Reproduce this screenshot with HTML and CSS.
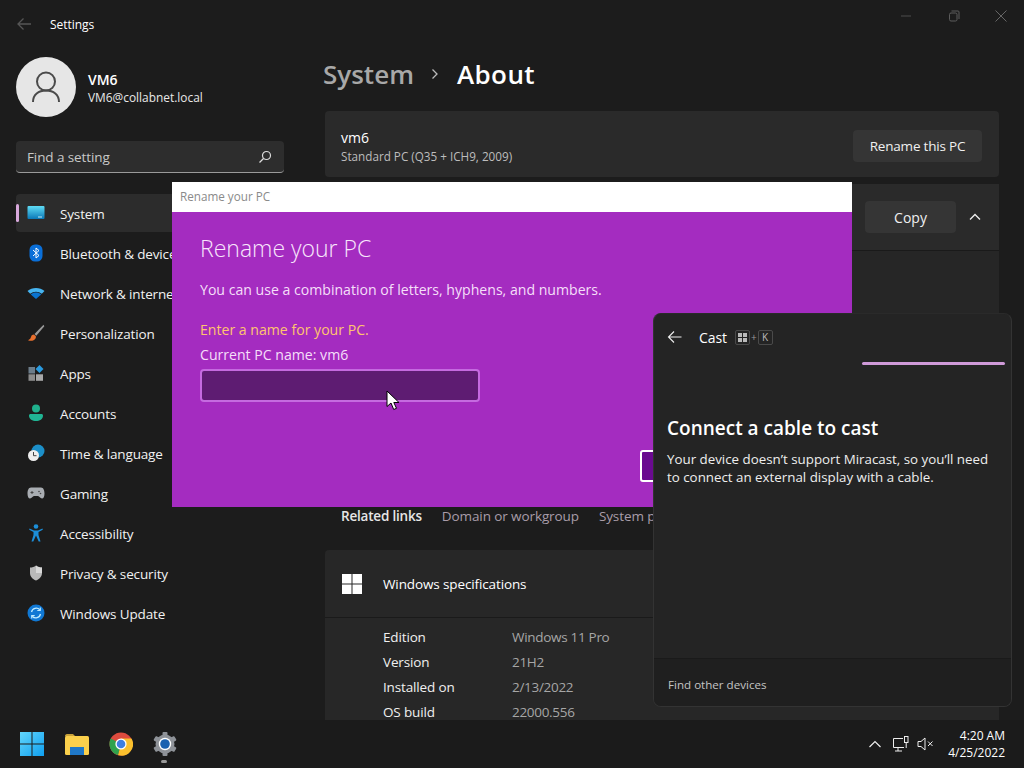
FILE: index.html
```html
<!DOCTYPE html>
<html lang="en">
<head>
<meta charset="utf-8">
<title>Settings</title>
<link rel="stylesheet" href="styles.css">
</head>
<body>
<div class="screen">
  <div class="settings">
    <aside class="sidebar">
      <div class="titlebar">
        <svg class="back-dim" width="16" height="16" viewBox="0 0 16 16"><path d="M15 8H2M7.500 2.500 2 8l5.500 5.500" fill="none" stroke="#555" stroke-width="1.300"/></svg>
        <span class="app-name">Settings</span>
      </div>
      <div class="profile">
        <div class="avatar">
          <svg width="32" height="36" viewBox="0 0 32 36"><circle cx="16" cy="12.500" r="9" fill="none" stroke="#4a4a4a" stroke-width="2"/><path d="M3 33c0-7.500 5.500-11.500 13-11.500S29 25.500 29 33" fill="none" stroke="#4a4a4a" stroke-width="2"/></svg>
        </div>
        <div class="who">
          <div class="who-name">VM6</div>
          <div class="who-mail">VM6@collabnet.local</div>
        </div>
      </div>
      <div class="search">
        <span>Find a setting</span>
        <svg width="14" height="14" viewBox="0 0 14 14"><circle cx="8.500" cy="5.500" r="4" fill="none" stroke="#ddd" stroke-width="1.200"/><path d="M5.500 8.500 1.500 12.500" stroke="#ddd" stroke-width="1.200"/></svg>
      </div>
      <nav class="nav">
        <div class="nav-item active">
          <span class="pill"></span>
          <svg width="18" height="16" viewBox="0 0 18 16"><defs><linearGradient id="sys" x1="0" y1="0" x2="0" y2="1"><stop offset="0" stop-color="#5fdcf5"/><stop offset="1" stop-color="#0a78b8"/></linearGradient></defs><rect x="0.500" y="1" width="17" height="13" rx="1" fill="url(#sys)"/><rect x="11" y="11.500" width="4" height="1" fill="#bfeaf5"/></svg>
          <span>System</span>
        </div>
        <div class="nav-item">
          <svg width="14" height="18" viewBox="0 0 14 18"><rect x="0.500" y="0.500" width="13" height="17" rx="5.500" fill="#0a6fd8"/><path d="M4 6l6 5.500L7 14V4l3 2.500L4 12" fill="none" stroke="#fff" stroke-width="1"/></svg>
          <span>Bluetooth &amp; devices</span>
        </div>
        <div class="nav-item">
          <svg width="18" height="12" viewBox="0 0 18 12"><path d="M0.500 4C5 0 13 0 17.500 4L14.800 6.800C11.500 4 6.500 4 3.200 6.800Z" fill="#46b4f0"/><path d="M3.800 7.400C6.800 4.900 11.200 4.900 14.200 7.400L9 12Z" fill="#0a74d0"/></svg>
          <span>Network &amp; internet</span>
        </div>
        <div class="nav-item">
          <svg width="18" height="18" viewBox="0 0 18 18"><path d="M16.500 0.800 7.500 10l1.800 1.800 8-9.500Z" fill="#9a9a9a"/><path d="M6.800 10.500c-2.500.2-2.600 2.200-3.200 3.600-.4 1-1.500 1.800-2.600 2.200 2.800 1 6.200.6 7.500-1.800.6-1.200.6-2-.1-2.800Z" fill="#e8702e"/></svg>
          <span>Personalization</span>
        </div>
        <div class="nav-item">
          <svg width="16" height="16" viewBox="0 0 16 16"><rect x="0.500" y="2" width="6.500" height="6.500" fill="#6d7d8a"/><rect x="0.500" y="9.300" width="6.500" height="6.500" fill="#8c8c8c"/><rect x="8" y="9.300" width="7" height="6.500" fill="#a8a8a8"/><path d="M11.500 0 15.500 4 11.500 8 7.500 4Z" fill="#2a9be0"/></svg>
          <span>Apps</span>
        </div>
        <div class="nav-item">
          <svg width="16" height="18" viewBox="0 0 16 18"><circle cx="8" cy="4.500" r="4" fill="#1fb08c"/><path d="M1 11.500c0-1 .8-1.500 1.500-1.500h11c.7 0 1.500.5 1.500 1.500 0 4-3.500 5.500-7 5.500s-7-1.500-7-5.500Z" fill="#20b594"/></svg>
          <span>Accounts</span>
        </div>
        <div class="nav-item">
          <svg width="18" height="18" viewBox="0 0 18 18"><circle cx="11" cy="7" r="6.500" fill="#1c8fc8"/><circle cx="6.500" cy="11.500" r="5.500" fill="#eee"/><path d="M6.500 8v3.700h3" fill="none" stroke="#444" stroke-width="1"/></svg>
          <span>Time &amp; language</span>
        </div>
        <div class="nav-item">
          <svg width="18" height="12" viewBox="0 0 18 12"><path d="M4 0.500h10c2.500 0 3.500 3 3.500 6 0 3-1 5-2.500 5-2 0-2.500-2.500-4-2.500H7c-1.500 0-2 2.500-4 2.500-1.500 0-2.500-2-2.500-5s1-6 3.500-6Z" fill="#a9adb2"/><path d="M3.500 5.500h3M5 4v3" stroke="#444" stroke-width="1"/><circle cx="12" cy="4.500" r=".8" fill="#444"/><circle cx="13.500" cy="6.500" r=".8" fill="#444"/></svg>
          <span>Gaming</span>
        </div>
        <div class="nav-item">
          <svg width="14" height="18" viewBox="0 0 14 18"><circle cx="7" cy="2.500" r="2.300" fill="#1c8ed8"/><path d="M0.500 4.500 5 6.500h4l4.500-2 .3 1.200L9.500 8v3l2 6.500h-1.800L7 11.500 4.300 17.500H2.500l2-6.500V8L0.200 5.700Z" fill="#1c8ed8"/></svg>
          <span>Accessibility</span>
        </div>
        <div class="nav-item">
          <svg width="14" height="16" viewBox="0 0 14 16"><path d="M7 0.500c1.800 1.400 3.800 2 6 2v5.500c0 3.500-2.500 6-6 7.500-3.500-1.500-6-4-6-7.500V2.500c2.200 0 4.200-.6 6-2Z" fill="#b9b9b9"/><path d="M7 0.500c1.800 1.400 3.800 2 6 2v5.500H7Z" fill="#d8d8d8"/></svg>
          <span>Privacy &amp; security</span>
        </div>
        <div class="nav-item">
          <svg width="18" height="18" viewBox="0 0 18 18"><circle cx="9" cy="9" r="8.500" fill="#1078d4"/><path d="M4.500 8a4.800 4.800 0 0 1 8.300-2.200M13.500 10a4.800 4.800 0 0 1-8.300 2.200" fill="none" stroke="#bfeaff" stroke-width="1.300"/><path d="M13.300 3.500v3h-3M4.700 14.500v-3h3" fill="none" stroke="#bfeaff" stroke-width="1.100"/></svg>
          <span>Windows Update</span>
        </div>
      </nav>
    </aside>
    <main class="content">
      <div class="winctl">
        <svg width="12" height="12" viewBox="0 0 12 12"><path d="M1 6h10" stroke="#4d4d4d"/></svg>
        <svg width="12" height="12" viewBox="0 0 12 12"><rect x="1.500" y="3" width="7.500" height="8" rx="1.500" fill="none" stroke="#5c5c5c"/><path d="M3.500 1h6.500a1 1 0 0 1 1 1v7" fill="none" stroke="#5c5c5c"/></svg>
        <svg width="12" height="12" viewBox="0 0 12 12"><path d="M.5.500l11 11M11.500.500l-11 11" stroke="#666"/></svg>
      </div>
      <h1 class="crumbs">
        <span class="crumb-parent">System</span>
        <svg class="crumb-sep" width="10" height="12" viewBox="0 0 10 12"><path d="M2.500 1.500 7 6l-4.500 4.500" fill="none" stroke="#bbb" stroke-width="1.300"/></svg>
        <span class="crumb-current">About</span>
      </h1>
      <section class="card card-name">
        <div>
          <div class="pc-name">vm6</div>
          <div class="pc-model">Standard PC (Q35 + ICH9, 2009)</div>
        </div>
        <button class="btn btn-rename">Rename this PC</button>
      </section>
      <section class="card card-device">
        <div class="device-head">
          <button class="btn btn-copy">Copy</button>
          <svg width="14" height="14" viewBox="0 0 14 14"><path d="M2 9.500 7 4.500l5 5" fill="none" stroke="#eee" stroke-width="1.300"/></svg>
        </div>
        <div class="device-body"></div>
      </section>
      <div class="related">
        <strong>Related links</strong>
        <span>Domain or workgroup</span>
        <span>System protection</span>
      </div>
      <section class="card card-spec">
        <div class="spec-head">
          <svg width="20" height="20" viewBox="0 0 20 20"><path d="M0 0h9.500v9.500H0zM10.500 0H20v9.500h-9.500zM0 10.500h9.500V20H0zM10.500 10.500H20V20h-9.500z" fill="#fff"/></svg>
          <span>Windows specifications</span>
        </div>
        <dl class="spec-list">
          <dt>Edition</dt><dd>Windows 11 Pro</dd>
          <dt>Version</dt><dd>21H2</dd>
          <dt>Installed on</dt><dd>2/13/2022</dd>
          <dt>OS build</dt><dd>22000.556</dd>
        </dl>
      </section>
    </main>
  </div>
  <footer class="taskbar">
    <div class="task-apps">
      <svg width="24" height="24" viewBox="0 0 24 24"><defs><linearGradient id="win" x1="0" y1="0" x2="1" y2="1"><stop offset="0" stop-color="#62d6fb"/><stop offset="1" stop-color="#0f9ff0"/></linearGradient></defs><path d="M0 0h11.500v11.500H0zM12.500 0H24v11.500H12.500zM0 12.500h11.500V24H0zM12.500 12.500H24V24H12.500z" fill="url(#win)"/></svg>
      <svg width="26" height="24" viewBox="0 0 26 24"><path d="M1 4c0-1 .6-2 2-2h6l2.500 2.500H1Z" fill="#c9a23a"/><rect x="1" y="4" width="24" height="19" rx="1.500" fill="#fbd04c"/><path d="M6 15h14v8H6Z" fill="#1f78c8"/></svg>
      <svg class="task-chrome" width="24" height="24" viewBox="0 0 24 24"><circle cx="12" cy="12" r="11.500" fill="#dd4b3e"/><path d="M12 6.500h10.500A11.500 11.500 0 0 1 9 23.100L12 12Z" fill="#fbc02d"/><path d="M12 12 9 23.100A11.500 11.500 0 0 1 1.800 6.500Z" fill="#2fa24d"/><circle cx="12" cy="12" r="5.600" fill="#fff"/><circle cx="12" cy="12" r="4.300" fill="#3f7fe0"/></svg>
      <div class="task-active">
        <svg width="26" height="26" viewBox="0 0 26 26"><circle cx="13" cy="13" r="9.500" fill="#8e9298"/><g fill="#8e9298"><rect x="10.500" y="1" width="5" height="24" rx="1"/><rect x="10.500" y="1" width="5" height="24" rx="1" transform="rotate(60 13 13)"/><rect x="10.500" y="1" width="5" height="24" rx="1" transform="rotate(120 13 13)"/></g><circle cx="13" cy="13" r="6.200" fill="#fff"/><circle cx="13" cy="13" r="4.800" fill="#1b62b0"/></svg>
        <span class="dot"></span>
      </div>
    </div>
    <div class="tray">
      <svg class="tray-up" width="14" height="14" viewBox="0 0 14 14"><path d="M1.500 10 7 4.500l5.500 5.500" fill="none" stroke="#eee" stroke-width="1.200"/></svg>
      <svg width="17" height="17" viewBox="0 0 17 17"><path d="M11 2.500H1.500v9H12M6 11.500V15M3 15h7" fill="none" stroke="#eee"/><rect x="12.500" y="0.500" width="3.500" height="6" fill="none" stroke="#eee"/><path d="M14.200 6.500V12" stroke="#eee"/></svg>
      <svg width="17" height="14" viewBox="0 0 17 14"><path d="M1 4.500h3L8 1v12L4 9.500H1Z" fill="none" stroke="#eee"/><path d="M11 4.500l4.500 4.500M15.500 4.500 11 9" stroke="#eee"/></svg>
      <div class="clock"><div>4:20 AM</div><div>4/25/2022</div></div>
    </div>
  </footer>
  <div class="dialog">
    <div class="dialog-title">Rename your PC</div>
    <div class="dialog-body">
      <h2>Rename your PC</h2>
      <p class="dialog-text">You can use a combination of letters, hyphens, and numbers.</p>
      <p class="dialog-warn">Enter a name for your PC.</p>
      <p class="dialog-current">Current PC name: vm6</p>
      <div class="dialog-input"></div>
      <div class="dialog-actions"><span class="dialog-next"></span></div>
    </div>
  </div>
  <div class="flyout">
    <div class="fly-main">
      <div class="fly-head">
        <svg width="16" height="14" viewBox="0 0 16 14"><path d="M14.500 7H1.500M7 1.500 1.500 7 7 12.500" fill="none" stroke="#eee" stroke-width="1.100"/></svg>
        <span class="fly-title">Cast</span>
        <span class="keys">
          <kbd class="key"><svg width="9" height="9" viewBox="0 0 9 9"><path d="M0 0h4v4H0zM5 0h4v4H5zM0 5h4v4H0zM5 5h4v4H5z" fill="#bbb"/></svg></kbd>
          <span class="plus">+</span>
          <kbd class="key">K</kbd>
        </span>
      </div>
      <div class="fly-progress"><span class="fly-bar"></span></div>
      <h3>Connect a cable to cast</h3>
      <p>Your device doesn’t support Miracast, so you’ll need to connect an external display with a cable.</p>
    </div>
    <div class="fly-foot">Find other devices</div>
  </div>
  <svg class="cursor" width="14" height="21" viewBox="0 0 14 21"><path d="M1 1v15.500l4-3.500 2.700 6.500 2.800-1.200L7.800 12.500H13Z" fill="#fff" stroke="#000"/></svg>
</div>
</body>
</html>
```
FILE: styles.css
```css
* { box-sizing: border-box; }
html, body { margin: 0; padding: 0; }
body { background: #1c1c1c; color: #fff; font-family: "Open Sans", "Noto Sans", "Liberation Sans", sans-serif; font-size: 14px; }
.screen { position: relative; width: 1024px; height: 768px; overflow: hidden; display: flex; flex-direction: column; }
.settings { height: 720px; display: flex; overflow: hidden; background: #1c1c1c; }

.sidebar { width: 323px; flex: none; padding-left: 16px; }
.titlebar { height: 48px; display: flex; align-items: center; gap: 18px; }
.app-name { font-size: 12px; letter-spacing: -0.05px; }
.profile { margin-top: 9px; display: flex; align-items: center; gap: 12px; }
.avatar { width: 60px; height: 60px; border-radius: 50%; background: #e6e6e6; display: flex; align-items: center; justify-content: center; }
.who { padding-top: 2px; }
.who-name { font-size: 14px; font-weight: 600; line-height: 19px; }
.who-mail { font-size: 11.900px; line-height: 17px; color: #e8e8e8; }
.search { margin-top: 24px; width: 268px; height: 32px; background: #2d2d2d; border-radius: 4px; border-bottom: 1px solid #9a9a9a; padding: 0 12px 0 11px; display: flex; align-items: center; justify-content: space-between; color: #c8c8c8; font-size: 13.500px; letter-spacing: -0.1px; }
.nav { margin-top: 21px; display: flex; flex-direction: column; gap: 2px; width: 268px; }
.nav-item { position: relative; height: 38px; display: flex; align-items: center; font-size: 13.500px; letter-spacing: -0.15px; padding: 2px 0 0 44px; white-space: nowrap; color: #f2f2f2; border-radius: 4px; }
.nav-item svg { position: absolute; left: 20px; top: 50%; transform: translate(-50%, -50%); }
.nav-item.active { background: #2c2c2c; }
.pill { position: absolute; left: 0; top: 10px; width: 3px; height: 18px; border-radius: 2px; background: #d8a8dc; }

.content { position: relative; flex: 1; padding-right: 25px; min-width: 0; }
.winctl { position: absolute; top: 10px; right: 17px; display: flex; gap: 35px; }
.winctl svg:first-child { margin-right: 1px; }
.crumbs { margin: 0; height: 111px; padding-top: 53px; font-size: 26px; line-height: 42px; font-weight: 600; display: flex; align-items: flex-start; }
.crumb-parent { color: #a8a8a8; }
.crumb-sep { margin: 15px 17px 0 16px; }
.crumb-current { letter-spacing: 0.4px; }
.card { margin-left: 2px; background: #2a2a2a; border-radius: 4px; }
.card-name { height: 66px; display: flex; align-items: center; justify-content: space-between; padding: 4px 17px 0 16px; }
.pc-name { font-size: 14px; line-height: 20px; }
.pc-model { font-size: 11.700px; line-height: 16px; color: #bdbdbd; }
.btn { font: inherit; color: #f0f0f0; background: #353535; border: 0; border-radius: 4px; height: 32px; padding: 0; }
.btn-rename { width: 129px; font-size: 13.500px; letter-spacing: -0.2px; }
.card-device { margin-top: 7px; height: 306px; background: #262626; }
.device-head { height: 67px; border-bottom: 1px solid #1a1a1a; display: flex; align-items: center; justify-content: flex-end; gap: 12px; padding-right: 17px; background: #2a2a2a; }
.btn-copy { width: 91px; }
.related { margin: 7px 0 0 18px; height: 36px; padding-top: 2px; display: flex; align-items: center; gap: 20px; color: #a99ca9; font-size: 13.500px; letter-spacing: -0.1px; white-space: nowrap; overflow: hidden; }
.related strong { color: #e6e6e6; font-weight: 600; letter-spacing: -0.2px; }
.card-spec { margin-top: 17px; background: #272727; }
.spec-head { height: 68px; padding-left: 17px; display: flex; align-items: center; gap: 21px; border-bottom: 1px solid #1a1a1a; font-size: 13.500px; letter-spacing: -0.12px; }
.spec-list { margin: 6px 0 0; padding-left: 58px; display: grid; grid-template-columns: 129px 1fr; grid-auto-rows: 25px; align-items: center; font-size: 13.500px; letter-spacing: -0.15px; }
.spec-list dt { color: #f0f0f0; }
.spec-list dd { margin: 0; color: #a6a6a6; letter-spacing: -0.3px; }

.taskbar { height: 48px; background: #1b1b1b; display: flex; align-items: center; justify-content: space-between; padding-right: 19px; }
.task-apps { display: flex; align-items: center; padding-left: 20px; gap: 20px; }
.task-chrome { margin-left: -1px; }
.task-active { position: relative; display: flex; margin-left: -1px; }
.dot { position: absolute; left: 9px; bottom: -6px; width: 6px; height: 3px; border-radius: 2px; background: #999; }
.tray { display: flex; align-items: center; gap: 8px; }
.tray-up { margin-right: 2px; }
.clock { margin-left: 6px; text-align: right; font-size: 12px; line-height: 17px; }

.dialog { position: absolute; left: 172px; top: 182px; width: 680px; height: 325px; background: #a42cc0; }
.dialog-title { height: 30px; background: #fff; color: #8a8a8a; font-size: 11.700px; line-height: 29px; padding-left: 8px; }
.dialog-body { padding: 18px 28px 0; position: relative; }
.dialog-body h2 { margin: 0; font-size: 23px; font-weight: 300; line-height: 36px; color: #f8e6fc; }
.dialog-body p { margin: 0; font-size: 14.100px; line-height: 20px; color: #f5dff9; }
.dialog-text { padding-top: 14px; }
.dialog-body .dialog-warn { margin-top: 20px; color: #ffc46e; }
.dialog-body .dialog-current { margin-top: 5px; }
.dialog-input { margin-top: 4px; width: 280px; height: 33px; background: #5e1c72; border: 2px solid #c56ae0; border-radius: 4px; }
.dialog-actions { position: absolute; left: 468px; top: 238px; }
.dialog-next { display: block; width: 100px; height: 32px; background: #6a0a90; border: 2px solid #fff; border-radius: 3px; }

.flyout { position: absolute; left: 653px; top: 313px; width: 359px; height: 394px; background: #242424; border-radius: 8px; border: 1px solid #333; border-top-color: #2a2a2a; display: flex; flex-direction: column; overflow: hidden; }
.fly-main { flex: 1; padding: 0 14px 0 13px; }
.fly-head { height: 46px; display: flex; align-items: center; }
.fly-title { margin-left: 16px; font-size: 14px; letter-spacing: -0.1px; }
.keys { margin-left: 8px; display: flex; align-items: center; gap: 1px; font-size: 10px; color: #bbb; }
.key { width: 15px; height: 15px; border: 1px solid #4a4a4a; border-radius: 2px; display: flex; align-items: center; justify-content: center; font: inherit; }
.plus { color: #999; }
.fly-progress { height: 5px; margin-top: 2px; display: flex; justify-content: flex-end; margin-right: -8px; }
.fly-bar { width: 143px; height: 3px; border-radius: 2px; background: #cf9ad8; }
.flyout h3 { margin: 47px 0 0; font-size: 19px; line-height: 28px; font-weight: 600; }
.flyout p { margin: 8px 0 0; font-size: 13.330px; line-height: 18px; color: #eee; }
.fly-foot { height: 48px; padding: 3px 0 0 14px; background: #1f1f1f; border-top: 1px solid #1a1a1a; display: flex; align-items: center; font-size: 11.600px; color: #c4c4c4; }
.cursor { position: absolute; left: 386px; top: 390px; }
```
